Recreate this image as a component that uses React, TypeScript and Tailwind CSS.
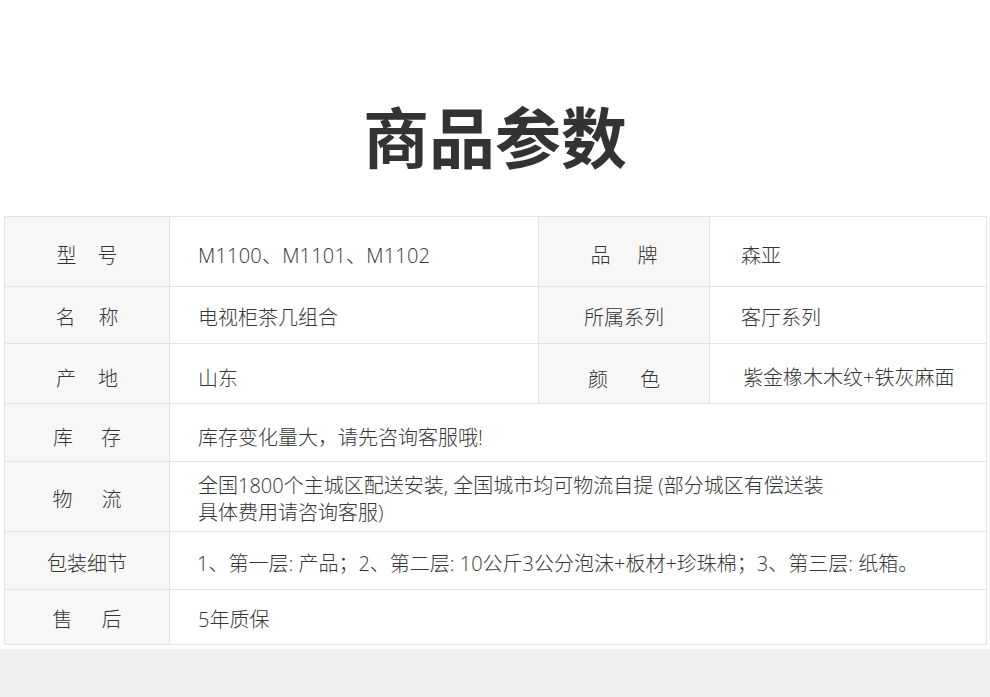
import React from "react";

const font = { fontFamily: '"Open Sans", "Noto Sans CJK SC", sans-serif' };
const titleFont = { fontFamily: '"Noto Sans CJK SC", "Noto Sans", sans-serif' };

function Label({ chars, gap }: { chars: string[]; gap?: number }) {
  return (
    <span className="inline-flex" style={{ gap: gap ?? 0 }}>
      {chars.map((c, i) => (
        <span key={i}>{c}</span>
      ))}
    </span>
  );
}

export default function App() {
  const base = "border-r border-b border-[#e3e3e3] flex items-center text-[20px] font-light";
  const labelCls = base + " bg-[#f7f7f7] justify-center text-[#333]";
  const valueCls = base + " bg-white text-[#363636] leading-[24px]";

  return (
    <div className="w-[990px] h-[697px] bg-white flex flex-col overflow-hidden" style={font}>
      <div className="h-[216px] flex items-start justify-center pt-[96px]" style={titleFont}>
        <h1 className="text-[66px] leading-[76px] font-bold text-[#333]">商品参数</h1>
      </div>

      <div className="ml-[4px] w-[983px] border-l border-t border-[#e3e3e3] grid grid-cols-[165px_369px_171px_277px] grid-rows-[70px_57px_60px_58px_70px_58px_55px]">
        <div className={labelCls + " pt-[9px]"}>
          <Label chars={["型", "号"]} gap={21} />
        </div>
        <div className={valueCls + " pl-[28px] pt-[9px] tracking-[0.2px]"}>M1100、M1101、M1102</div>
        <div className={labelCls + " pt-[9px]"}>
          <Label chars={["品", "牌"]} gap={27} />
        </div>
        <div className={valueCls + " pl-[31px] pt-[9px]"}>森亚</div>

        <div className={labelCls + " pt-[5px]"}>
          <Label chars={["名", "称"]} gap={23} />
        </div>
        <div className={valueCls + " pl-[28px] pt-[5px]"}>电视柜茶几组合</div>
        <div className={labelCls + " pt-[5px]"}>所属系列</div>
        <div className={valueCls + " pl-[31px] pt-[5px]"}>客厅系列</div>

        <div className={labelCls + " pt-[10px]"}>
          <Label chars={["产", "地"]} gap={22} />
        </div>
        <div className={valueCls + " pl-[28px] pt-[10px]"}>山东</div>
        <div className={labelCls + " pt-[12px]"}>
          <Label chars={["颜", "色"]} gap={32} />
        </div>
        <div className={valueCls + " pl-[33px] pt-[8px]"}>紫金橡木木纹+铁灰麻面</div>

        <div className={labelCls + " pt-[10px]"}>
          <Label chars={["库", "存"]} gap={28} />
        </div>
        <div className={valueCls + " pl-[28px] col-span-3 pt-[10px]"}>库存变化量大，请先咨询客服哦!</div>

        <div className={labelCls + " pt-[6px]"}>
          <Label chars={["物", "流"]} gap={29} />
        </div>
        <div className={valueCls + " pl-[28px] col-span-3 pt-[4px]"}>
          <p className="leading-[27px]">
            全国1800个主城区配送安装, 全国城市均可物流自提 (部分城区有偿送装
            <br />
            具体费用请咨询客服)
          </p>
        </div>

        <div className={labelCls + " pt-[6px]"}>包装细节</div>
        <div className={valueCls + " pl-[27px] col-span-3 pt-[6px]"}>
          1、第一层: 产品；2、第二层: 10公斤3公分泡沫+板材+珍珠棉；3、第三层: 纸箱。
        </div>

        <div className={labelCls + " pt-[6px]"}>
          <Label chars={["售", "后"]} gap={29} />
        </div>
        <div className={valueCls + " pl-[28px] col-span-3 pt-[6px]"}>5年质保</div>
      </div>

      <div className="mt-[4px] flex-1 bg-[#efefef]" />
    </div>
  );
}
